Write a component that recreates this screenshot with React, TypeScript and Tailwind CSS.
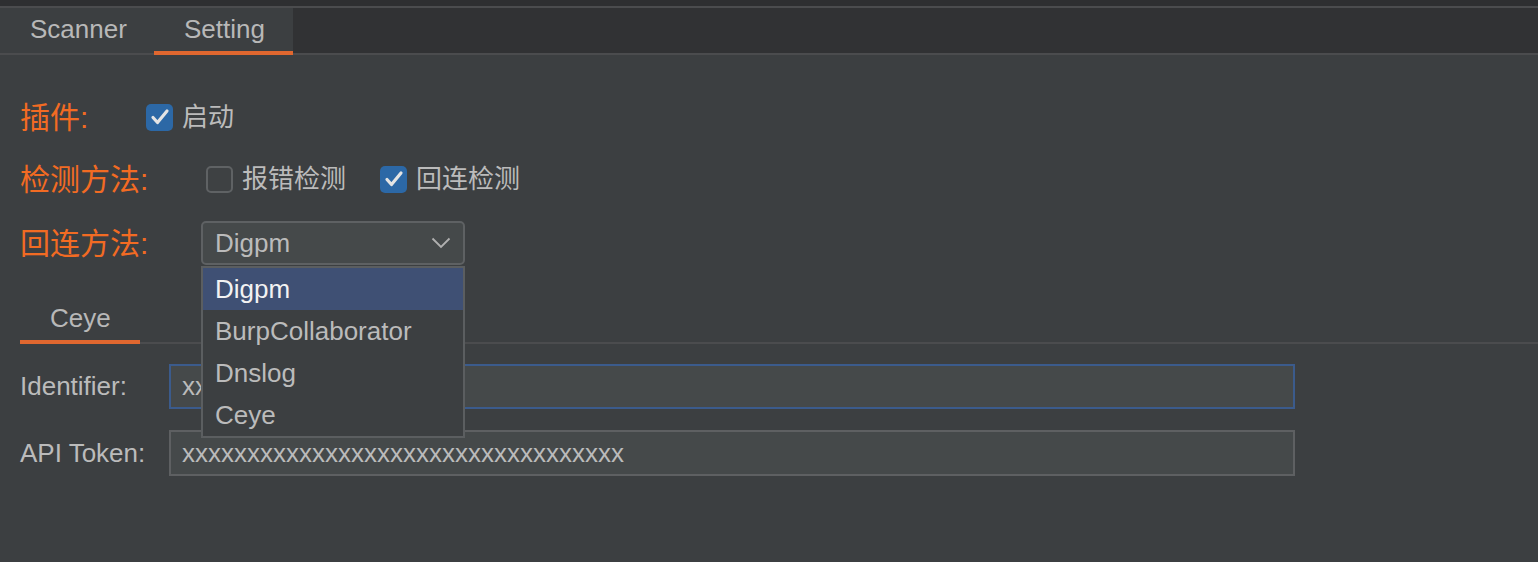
import React from "react";

const ORANGE = "text-[#f26b23]";

function CheckBox({ checked }: { checked: boolean }) {
  if (checked) {
    return (
      <span className="flex h-[27px] w-[27px] shrink-0 items-center justify-center rounded-[5px] bg-[#2c68a6]">
        <svg width="20" height="18" viewBox="0 0 20 18" fill="none">
          <path
            d="M3 9.5 L7.5 14.5 L17 3"
            stroke="#e4e4e4"
            strokeWidth="3.2"
            strokeLinecap="round"
            strokeLinejoin="round"
          />
        </svg>
      </span>
    );
  }
  return (
    <span className="block h-[27px] w-[27px] shrink-0 rounded-[5px] border-2 border-[#5f6264] bg-[#3e4143]" />
  );
}

const methods = ["Digpm", "BurpCollaborator", "Dnslog", "Ceye"];

export default function App() {
  return (
    <div className="h-[562px] w-full overflow-hidden bg-[#3c3f41] font-['Liberation_Sans','Noto_Sans_CJK_SC',sans-serif] text-[26px] text-[#bbbbbb]">
      <div className="h-[6px] bg-[#2e2f31]" />
      <div className="h-[2px] bg-[#4b4c4e]" />

      {/* top tabs */}
      <div className="flex h-[47px] border-b-2 border-[#4b4c4e] bg-[#313234]">
        <div className="flex bg-[#3c3f41]">
          <div className="flex w-[154px] items-center pb-[3px] pl-[30px] text-[#b8b8b8]">Scanner</div>
          <div className="-mb-[2px] flex w-[139px] items-center border-b-4 border-[#e0672f] pl-[30px] text-[#b8b8b8]">
            Setting
          </div>
        </div>
      </div>

      <div className="pl-[20px]">
        {/* plugin */}
        <div className="mt-[40px] flex h-[44px] items-center">
          <span className={`w-[126px] text-[30px] ${ORANGE}`}>插件:</span>
          <CheckBox checked />
          <span className="ml-[9px]">启动</span>
        </div>

        {/* detect method */}
        <div className="mt-[18px] flex h-[44px] items-center">
          <span className={`w-[186px] text-[30px] ${ORANGE}`}>检测方法:</span>
          <CheckBox checked={false} />
          <span className="ml-[9px]">报错检测</span>
          <span className="ml-[34px]">
            <CheckBox checked />
          </span>
          <span className="ml-[9px]">回连检测</span>
        </div>

        {/* callback method */}
        <div className="mt-[20px] flex h-[44px] items-center">
          <span className={`w-[181px] text-[30px] ${ORANGE}`}>回连方法:</span>
          <div className="relative h-[44px] w-[264px]">
            <div className="flex h-full items-center justify-between rounded-[5px] border-2 border-[#5e6163] bg-[#45494a] pl-[12px] pr-[12px]">
              <span>Digpm</span>
              <svg width="20" height="12" viewBox="0 0 20 12" fill="none">
                <path d="M1.5 1.5 L10 10 L18.5 1.5" stroke="#b0b0b0" strokeWidth="1.8" />
              </svg>
            </div>
            <div className="absolute left-0 top-[45px] z-10 w-[264px] border-2 border-[#5b5e60] bg-[#3c3f41]">
              {methods.map((m, i) => (
                <div
                  key={m}
                  className={`flex h-[42px] items-center pl-[12px] ${
                    i === 0 ? "bg-[#3f5074] text-[#f2f2f2]" : ""
                  }`}
                >
                  {m}
                </div>
              ))}
            </div>
          </div>
        </div>

        {/* sub tabs */}
        <div className="mt-[31px] flex h-[48px] border-b-2 border-[#4b4c4e]">
          <div className="-mb-[2px] flex w-[120px] items-center border-b-4 border-[#e0672f] pl-[30px] text-[#b8b8b8]">
            Ceye
          </div>
        </div>

        <div className="mt-[20px] flex h-[45px] items-center">
          <span className="w-[149px]">Identifier:</span>
          <div className="flex h-full w-[1126px] items-center border-2 border-[#3b5b8c] bg-[#45494a] pl-[11px]">
            xx
          </div>
        </div>

        <div className="mt-[21px] flex h-[46px] items-center">
          <span className="w-[149px]">API Token:</span>
          <div className="flex h-full w-[1126px] items-center border-2 border-[#5e6062] bg-[#45494a] pl-[11px]">
            xxxxxxxxxxxxxxxxxxxxxxxxxxxxxxxxxx
          </div>
        </div>
      </div>
    </div>
  );
}
